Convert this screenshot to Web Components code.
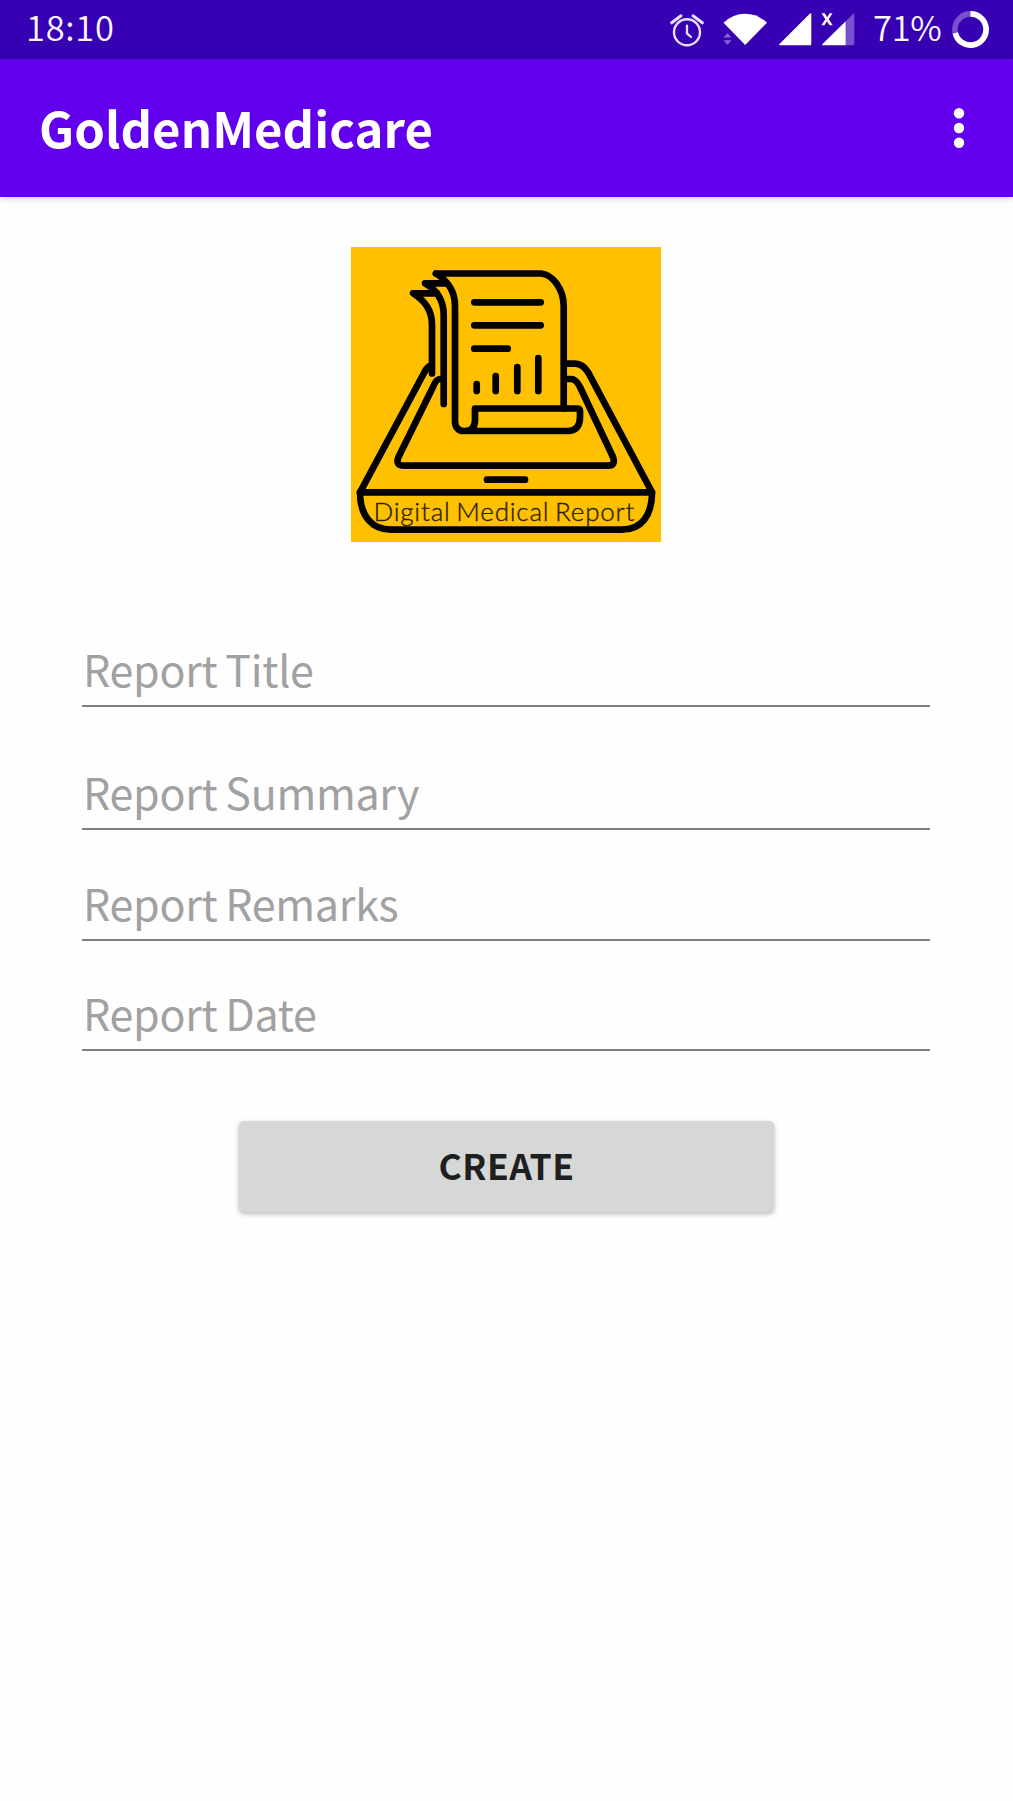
<!DOCTYPE html>
<html lang="en">
<head>
<meta charset="utf-8">
<title>GoldenMedicare</title>
<style>
html,body{margin:0;background:#fefefe}
body{font-family:"Noto Sans CJK SC","Noto Sans",sans-serif}
</style>
</head>
<body>
<report-screen></report-screen>
<script>
const define=(name,html)=>customElements.define(name,class extends HTMLElement{
  constructor(){super();this.attachShadow({mode:'open'}).innerHTML=html;}
});
define('status-bar',`<style>
:host{display:flex;height:59px;background:#3700b3;color:#fbf8ff;box-sizing:border-box;padding:0 24px 0 26px;align-items:flex-start;justify-content:space-between}
.t{font-size:34.5px;line-height:53px;font-weight:350;white-space:nowrap}
.time{letter-spacing:.7px}
.r{display:flex;align-items:flex-start}
svg{display:block;height:59px;flex:none}
.pct{width:67px;margin-right:11px;letter-spacing:-.3px}
</style>
<span class="t time">18:10</span>
<div class="r">
<svg width="203" viewBox="670 0 203 59">
<g fill="none" stroke="#eadfff" stroke-width="2.2" stroke-linecap="round"><circle cx="687" cy="32.3" r="13" stroke-width="2.4"/><path d="M687 25.7V33.4L691 37" stroke-width="2.3"/><path d="M671.7 22.8L681 15.8M702.3 22.8L693 15.8" stroke-width="3"/></g>
<path d="M723.5 22.7Q733 13.7 745.2 13.7Q757.5 13.7 767 22.7L745.2 45Z" fill="#fff"/>
<path d="M723.5 37.5L727.5 33L731.5 37.5ZM723.5 40.2H731.5L727.5 44.7Z" fill="#8766d2"/>
<path d="M779.5 45.3Q778.5 45.3 779.5 44L809.5 14Q811.3 12.5 811.3 14.5V44Q811.3 45.3 810 45.3Z" fill="#fff"/>
<path d="M845.7 21.5L853 14Q854.3 12.6 854.3 14.5V44Q854.3 45.3 853 45.3H845.7Z" fill="#7950cd"/>
<path d="M822.5 45.3Q821.5 45.3 822.5 44L845.7 21.3V45.3Z" fill="#fff"/>
<path d="M821.5 13.3H824.7L827.2 17.2L829.6 13.3H832.5L828.7 19.2L832.7 25.3H829.5L827 21.2L824.4 25.3H821.3L825.4 19.2Z" fill="#fff"/>
</svg>
<span class="t pct">71%</span>
<svg width="38" viewBox="951 0 38 59"><g fill="none" stroke-width="5.6"><circle cx="970.5" cy="29.5" r="15.6" stroke="#7950cd"/><path d="M970.5 13.9A15.6 15.6 0 1 1 955.3 33" stroke="#fff"/></g></svg>
</div>`);
define('app-bar',`<style>
:host{display:flex;height:138px;background:#6200ee;color:#fff;justify-content:space-between;padding:0 46px 0 39px;box-shadow:0 1px 7px rgba(0,0,0,.2)}
h1{margin:0;font-size:49px;line-height:136px;font-weight:700;white-space:nowrap;letter-spacing:.08px}
svg{display:block}
</style><h1><slot></slot></h1>
<svg width="16" height="138" viewBox="951 59 16 138" fill="#fff"><circle cx="959" cy="113.2" r="5.2"/><circle cx="959" cy="128" r="5.2"/><circle cx="959" cy="142.8" r="5.2"/></svg>`);
define('report-logo',`<style>
:host{display:block;width:310px;height:295px}svg{display:block}
text{font-family:Lato,sans-serif;font-weight:300;font-size:26px;word-spacing:-2px;stroke:#2b2100;stroke-width:.35px}
</style>
<svg width="310" height="295" viewBox="351 247 310 295">
<rect x="351" y="247" width="310" height="295" fill="#ffc000"/>
<g fill="none" stroke="#000" stroke-width="6.7" stroke-linecap="round" stroke-linejoin="round">
<path d="M436 273.5H541C552 274 563.7 289 563.7 306V408.5"/>
<path d="M436 273.5C448 281 455 292 455 306V421C455 427 458 431 464 431H568C576 431 580 426 580 417V411Q580 408.5 577 408.5H475V420Q475 431 465 431"/>
<path d="M445 283.3H425C437 290 443.7 300 443.7 315V404"/>
<path d="M437 293.3H413C425 301 432 310 432 325V373.5"/>
<path d="M474.3 302.3H540.7M474.3 325.3H540.7M474.3 348.7H507.7M476.7 384V391M495.7 376V391M517.3 367V391M538.3 358V391"/>
<path d="M430 366Q427 367 424 373L360 492.3H652L588.5 373Q583 363.7 575 363.7H567"/>
<path d="M440 379Q436 379 433 387L398.5 457Q395 465.7 404 465.7H608Q616 465.7 613 457L580 387Q576 379 571 379H567"/>
<path d="M360 492.3C360 516 372 529.7 391 529.7H622C641 529.7 652 516 652 492.3M487 479.7H525"/>
</g>
<text x="373.5" y="521.3" textLength="261" fill="#2b2100">Digital Medical Report</text>
</svg>`);
define('text-field',`<style>
:host{display:block;box-sizing:border-box;height:69px;border-bottom:2.6px solid #7f7f7f;padding-left:1px}
span{display:block;font-size:43px;line-height:60px;color:#a1a1a1;font-weight:400;white-space:nowrap;letter-spacing:-.3px;word-spacing:-1.5px}
</style><span><slot></slot></span>`);
define('raised-button',`<style>
:host{display:block}
button{display:block;width:535px;height:91px;border:0;border-radius:5px;padding:0 0 4px 1px;background:#d6d8d7;box-shadow:0 2px 5px rgba(0,0,0,.28);font:700 35.5px/87px "Noto Sans CJK SC",sans-serif;letter-spacing:.4px;color:#1e1f1e}
</style><button><slot></slot></button>`);
define('report-form',`<style>
:host{display:flex;flex-direction:column;align-items:center;padding:50px 1px 0 0}
.f{display:flex;flex-direction:column;width:848px;margin:96px 0 70px;gap:41.7px}
.first{margin-bottom:12.3px}
</style>
<report-logo></report-logo>
<div class="f"><text-field class="first">Report Title</text-field><text-field>Report Summary</text-field><text-field>Report Remarks</text-field><text-field>Report Date</text-field></div>
<raised-button>CREATE</raised-button>`);
define('report-screen',`<style>:host{display:block;height:1801px;overflow:hidden;background:#fefefe}</style>
<status-bar></status-bar><app-bar>GoldenMedicare</app-bar><report-form></report-form>`);
</script>
</body>
</html>
